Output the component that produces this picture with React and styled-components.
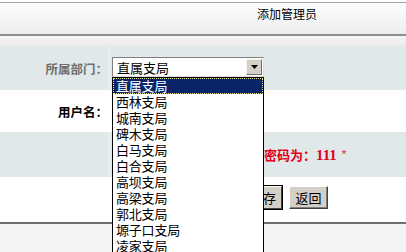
import React, { useState } from 'react';
import styled, { createGlobalStyle } from 'styled-components';

const GlobalStyle = createGlobalStyle`
  html, body {
    margin: 0;
    padding: 0;
    background: #ffffff;
  }
  body {
    font-family: "Noto Sans CJK SC", "DejaVu Sans", sans-serif;
    font-size: 12px;
    color: #000;
  }
`;

const StyledPage = styled.div`
  display: flex;
  flex-direction: column;
  width: 406px;
  height: 252px;
  overflow: hidden;
  padding-top: 2px;
  box-sizing: border-box;
`;

const StyledHeader = styled.div`
  display: flex;
  align-items: center;
  height: 34px;
  padding: 0 0 9px 257px;
  box-sizing: border-box;
  border-top: 1px solid #a3a3a3;
  border-bottom: 2px solid #8e8e8e;
  background: linear-gradient(#fefefe, #ededed);
  font-size: 12px;
  line-height: 14px;
`;

const StyledStrip = styled.div`
  height: 10px;
  background: linear-gradient(#f4f4f4, #ebebeb);
`;

const StyledRow = styled.div`
  display: flex;
  height: ${({ height }) => height}px;
  background: ${({ tinted }) => (tinted ? '#e1e8e9' : '#ffffff')};
`;

const StyledLabel = styled.div`
  display: flex;
  flex-shrink: 0;
  align-items: center;
  justify-content: flex-end;
  width: 110px;
  box-sizing: border-box;
  font-weight: bold;
  font-size: 12.5px;
  color: ${({ muted }) => (muted ? '#6f6f6f' : '#000')};
  border-right: 2px solid ${({ tinted }) => (tinted ? '#eaeff0' : '#ffffff')};
`;

const StyledValue = styled.div`
  display: flex;
  align-items: ${({ top }) => (top ? 'flex-start' : 'center')};
  flex: 1;
  padding-left: ${({ indent }) => indent || 2}px;
  padding-top: ${({ top }) => top || 0}px;
  gap: ${({ gap }) => gap ?? 7}px;
`;

const StyledSelectWrap = styled.div`
  position: relative;
  z-index: 5;
`;

const StyledSelectBox = styled.div`
  display: flex;
  align-items: center;
  justify-content: space-between;
  width: 152px;
  height: 20px;
  box-sizing: border-box;
  border: 1px solid #7f7f7f;
  border-right-color: #dcdcdc;
  border-bottom-color: #dcdcdc;
  background: #fff;
  padding: 1px 1px 1px 4px;
  font-size: 13px;
`;

const StyledArrowButton = styled.span`
  display: flex;
  align-items: center;
  justify-content: center;
  width: 16px;
  height: 16px;
  box-sizing: border-box;
  background: #d4d0c8;
  border: 1px solid;
  border-color: #f4f3ef #6e6c68 #6e6c68 #f4f3ef;
`;

const StyledList = styled.ul`
  position: absolute;
  top: 20px;
  left: 0;
  width: 152px;
  margin: 0;
  padding: 0;
  list-style: none;
  background: #fff;
  border: 1px solid #000;
  box-sizing: border-box;
`;

const StyledOption = styled.li`
  height: 16px;
  line-height: 16px;
  padding-left: 3px;
  font-size: 13px;
  letter-spacing: -0.2px;
  white-space: nowrap;
  background: ${({ active }) => (active ? '#0a246a' : '#fff')};
  color: ${({ active }) => (active ? '#fff' : '#000')};
  outline: ${({ active }) => (active ? '1px dotted #f0e68c' : 'none')};
  outline-offset: -1px;
`;

const StyledInput = styled.input`
  width: 125px;
  height: 18px;
  box-sizing: border-box;
  border: 1px solid #7f9db9;
  font-size: 12px;
`;

const StyledHint = styled.span`
  color: #e0001b;
  font-weight: bold;
  font-size: 13px;
  white-space: nowrap;

  b {
    font-family: "Liberation Serif", serif;
    font-size: 15px;
  }

  i {
    font-style: normal;
    font-weight: normal;
    color: #e84a5a;
    margin-left: 4px;
  }
`;

const StyledButton = styled.button`
  width: ${({ width }) => width}px;
  height: 23px;
  padding: 0;
  font-family: "Noto Sans CJK SC", sans-serif;
  font-size: 13px;
  background: #d4d0c8;
  border: 1px solid;
  border-color: #ffffff #404040 #404040 #ffffff;
  box-shadow: ${({ primary }) => (primary ? '0 0 0 1px #000' : 'inset -1px -1px 0 #808080')};
  color: #000;
`;

const StyledFooter = styled.div`
  flex: 1;
  border-top: 2px solid #6e6e6e;
  background: #f3f3f3;
`;

const departments = [
  '直属支局',
  '西林支局',
  '城南支局',
  '碑木支局',
  '白马支局',
  '白合支局',
  '高坝支局',
  '高梁支局',
  '郭北支局',
  '塬子口支局',
  '凌家支局',
  '徐家支局',
];

const App = () => {
  const [selected, setSelected] = useState(0);

  return (
    <>
      <GlobalStyle />
      <StyledPage>
        <StyledHeader>添加管理员</StyledHeader>
        <StyledStrip />

        <StyledRow height={44} tinted>
          <StyledLabel muted tinted>所属部门：</StyledLabel>
          <StyledValue top={11}>
            <StyledSelectWrap>
              <StyledSelectBox>
                <span>{departments[selected]}</span>
                <StyledArrowButton>
                  <svg width="7" height="4" viewBox="0 0 7 4">
                    <path d="M0 0h7L3.5 4z" fill="#000" />
                  </svg>
                </StyledArrowButton>
              </StyledSelectBox>
              <StyledList role="listbox">
                {departments.map((name, i) => (
                  <StyledOption key={i} active={selected === i} onClick={() => setSelected(i)}>
                    {name}
                  </StyledOption>
                ))}
              </StyledList>
            </StyledSelectWrap>
          </StyledValue>
        </StyledRow>

        <StyledRow height={42}>
          <StyledLabel>用户名：</StyledLabel>
          <StyledValue>
            <StyledInput />
          </StyledValue>
        </StyledRow>

        <StyledRow height={45} tinted>
          <StyledLabel tinted />
          <StyledValue gap={1}>
            <StyledInput type="password" />
            <StyledHint>
              初始密码为：<b>111</b>
              <i>*</i>
            </StyledHint>
          </StyledValue>
        </StyledRow>

        <StyledRow height={45}>
          <StyledLabel />
          <StyledValue indent={134} top={9}>
            <StyledButton width={38} primary>保存</StyledButton>
            <StyledButton width={39}>返回</StyledButton>
          </StyledValue>
        </StyledRow>

        <StyledFooter />
      </StyledPage>
    </>
  );
};

export default App;
